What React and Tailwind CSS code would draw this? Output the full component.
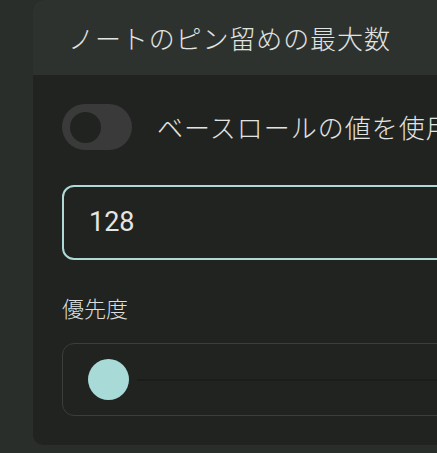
import React from 'react';

const jp = { fontFamily: '"Noto Sans CJK JP", "Noto Sans", sans-serif' };

const App = () => {
  return (
    <div className="w-[437px] h-[453px] overflow-hidden bg-[#2a2e2b] pl-[33px]" style={jp}>
      <div className="w-[520px] h-[445px] rounded-l-[10px] overflow-hidden bg-[#212321] flex flex-col">
        <header className="h-[75px] shrink-0 bg-[#2e322f] flex items-center pl-[35px]">
          <h1 className="text-[26px] font-light leading-none text-[#e1e4e1] tracking-[0.9px]">ノートのピン留めの最大数</h1>
        </header>

        <div className="flex-1 px-[29px] pt-[29px]">
          <div className="flex items-center gap-[25px]">
            <div className="w-[70px] h-[46px] rounded-full bg-[#3a3a3a] flex items-center pl-[8px] shrink-0">
              <div className="w-[31px] h-[31px] rounded-full bg-[#212321]"></div>
            </div>
            <span className="text-[26px] font-light leading-none text-[#e1e4e1] whitespace-nowrap tracking-[1px]">ベースロールの値を使用</span>
          </div>

          <div className="mt-[35px] h-[75px] border-2 border-[#b0d9d5] rounded-[12px] flex items-center pl-[25px]">
            <span className="text-[27px] text-[#e4e6e4]" style={{ fontFamily: 'Roboto, sans-serif' }}>128</span>
          </div>

          <p className="mt-[36px] text-[22px] font-light leading-none text-[#dcdfdc]">優先度</p>

          <div className="mt-[25px] h-[73px] border-[1.5px] border-[#3b3e3b] rounded-[12px] flex items-center pl-[25px]">
            <div className="w-[41px] h-[41px] rounded-full bg-[#a8dbd7] shrink-0"></div>
            <div className="ml-[8px] flex-1 h-[2px] bg-[#1b1d1b]"></div>
          </div>
        </div>
      </div>
    </div>
  );
};

export default App;
